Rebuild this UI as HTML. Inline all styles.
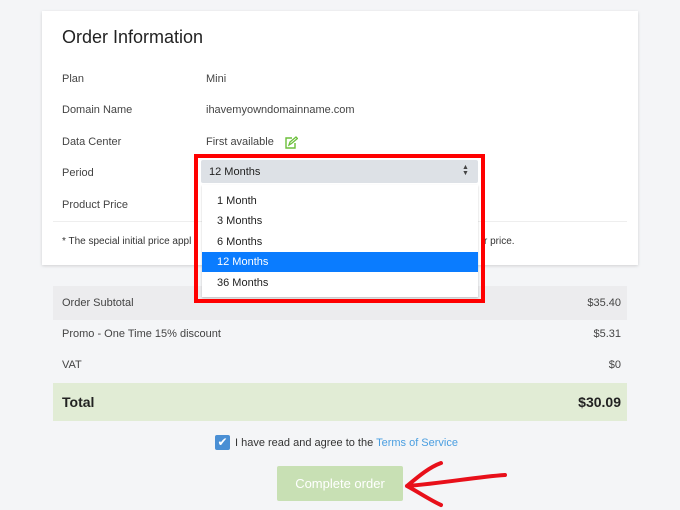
<html><head><style>
body{margin:0;width:680px;height:510px;background:#f4f5f7;font-family:"Liberation Sans",sans-serif;color:#444;position:relative;overflow:hidden;font-size:11px}
.a{position:absolute;white-space:nowrap}
.z{z-index:5}
.card{position:absolute;left:42px;top:11px;width:596px;height:254px;background:#fff;box-shadow:0 1px 3px rgba(0,0,0,.15)}
</style></head><body>
<div class="card"></div>
<div class="a" style="left:62px;top:27px;font-size:18px;color:#222">Order Information</div>
<div class="a" style="left:62px;top:73px">Plan</div><div class="a" style="left:206px;top:73px">Mini</div>
<div class="a" style="left:62px;top:104px">Domain Name</div><div class="a" style="left:206px;top:104px">ihavemyowndomainname.com</div>
<div class="a" style="left:62px;top:136px">Data Center</div><div class="a" style="left:206px;top:136px">First available</div>
<svg class="a" style="left:284px;top:136px" width="14" height="13" viewBox="0 0 14 13"><path d="M8 2H2v10h9V7" fill="none" stroke="#6bbf3a" stroke-width="1.4"/><path d="M5 9l1-3 6-5 1.5 1.5-6 5z" fill="none" stroke="#6bbf3a" stroke-width="1.3"/></svg>
<div class="a" style="left:62px;top:167px">Period</div>
<div class="a" style="left:62px;top:199px">Product Price</div>
<div class="a" style="left:53px;top:221px;width:574px;height:1px;background:#eee"></div>
<div class="a" style="left:62px;top:236px;font-size:10px;color:#333">* The special initial price appl</div>
<div class="a" style="left:484px;top:236px;font-size:10px;color:#333">r price.</div>
<div class="a z" style="left:194px;top:154px;width:283px;height:141px;border:4px solid #f00"></div>
<div class="a z" style="left:201px;top:160px;width:277px;height:23px;background:#dde1e6;border-radius:2px"></div>
<div class="a z" style="left:209px;top:166px;color:#222">12 Months</div>
<div class="a z" style="left:462px;top:165px;font-size:7px;line-height:6px;color:#444">▲<br>▼</div>
<div class="a z" style="left:202px;top:185px;width:276px;height:112px;background:#fff;box-shadow:0 1px 2px rgba(0,0,0,.2)"></div>
<div class="a z" style="left:217px;top:195px;color:#222">1 Month</div>
<div class="a z" style="left:217px;top:215px;color:#222">3 Months</div>
<div class="a z" style="left:217px;top:236px;color:#222">6 Months</div>
<div class="a z" style="left:202px;top:252px;width:276px;height:20px;background:#0a7cff"></div>
<div class="a z" style="left:217px;top:256px;color:#fff">12 Months</div>
<div class="a z" style="left:217px;top:277px;color:#222">36 Months</div>
<div class="a" style="left:53px;top:286px;width:574px;height:34px;background:#ececee"></div>
<div class="a" style="left:62px;top:297px">Order Subtotal</div><div class="a" style="right:59px;top:297px">$35.40</div>
<div class="a" style="left:62px;top:328px">Promo - One Time 15% discount</div><div class="a" style="right:59px;top:328px">$5.31</div>
<div class="a" style="left:62px;top:359px">VAT</div><div class="a" style="right:59px;top:359px">$0</div>
<div class="a" style="left:53px;top:383px;width:574px;height:38px;background:#e1ecd5"></div>
<div class="a" style="left:62px;top:394px;font-size:14px;font-weight:bold;color:#222">Total</div><div class="a" style="right:59px;top:394px;font-size:14px;font-weight:bold;color:#222">$30.09</div>
<div class="a" style="left:215px;top:435px;width:15px;height:15px;background:#4a8fd4;border-radius:2px;color:#fff;font-size:12px;text-align:center;line-height:15px">✔</div>
<div class="a" style="left:235px;top:437px;color:#333">I have read and agree to the <span style="color:#4a9ee0">Terms of Service</span></div>
<div class="a" style="left:277px;top:466px;width:126px;height:35px;background:#c8e0b4;border-radius:2px;color:#fff;font-size:13px;text-align:center;line-height:36px">Complete order</div>
<svg class="a" style="left:395px;top:455px" width="120" height="55"><path d="M12 31 C50 28 80 22 110 20 M12 31 C25 20 35 12 46 8 M12 31 C25 38 35 45 46 50" fill="none" stroke="#e8101a" stroke-width="4" stroke-linecap="round"/></svg>
</body></html>
